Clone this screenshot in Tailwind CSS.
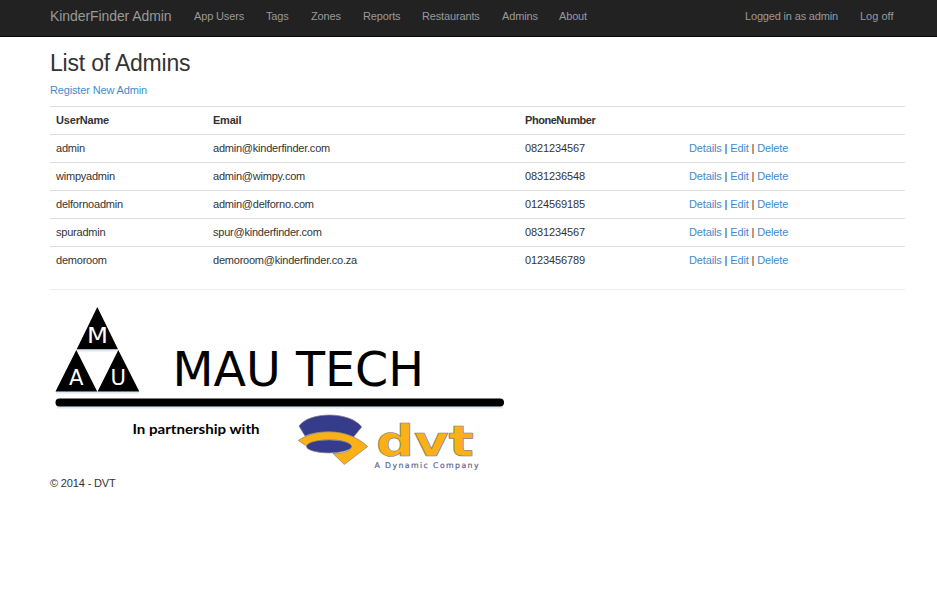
<!DOCTYPE html>
<html lang="en">
<head>
<meta charset="utf-8">
<title>List of Admins</title>
<script src="https://cdn.jsdelivr.net/npm/@tailwindcss/browser@4"></script>
</head>
<body class="bg-white font-['Liberation_Sans',Arial,sans-serif] text-[11px] leading-[15px] text-[#333]">
<nav class="h-[37px] bg-[#222] border-b border-[#080808] text-[#999] pl-[50px] pr-[43px] pt-[8px] flex">
  <a class="w-[144px] text-[14px] leading-[17px] tracking-[-0.08px] whitespace-nowrap">KinderFinder Admin</a>
  <div class="flex leading-[17px] tracking-[-0.15px] whitespace-nowrap">
    <a class="w-[72px]">App Users</a><a class="w-[45px]">Tags</a><a class="w-[52px]">Zones</a><a class="w-[59px]">Reports</a><a class="w-[80px]">Restaurants</a><a class="w-[57px]">Admins</a><a>About</a>
  </div>
  <div class="ml-auto flex leading-[17px] tracking-[-0.17px] whitespace-nowrap"><a class="w-[115px]">Logged in as admin</a><a class="w-[34px] tracking-normal">Log off</a></div>
</nav>
<main class="ml-[50px] w-[855px]">
  <h2 class="pt-[13px] text-[23px] leading-[26px] tracking-[-0.2px]">List of Admins</h2>
  <p class="mt-[7px] mb-[8px] text-[#428bca] tracking-[-0.15px]">Register New Admin</p>
  <table class="w-full table-fixed border-collapse text-left tracking-[-0.22px]">
    <colgroup><col class="w-[157px]"><col class="w-[312px]"><col class="w-[164px]"><col></colgroup>
    <thead><tr class="h-[28px] border-t border-[#ddd]"><th class="px-[6px] tracking-[-0.18px]">UserName</th><th class="px-[6px]">Email</th><th class="px-[6px] tracking-[-0.45px]">PhoneNumber</th><th></th></tr></thead>
    <tbody>
      <tr class="h-[28px] border-t border-[#ddd]"><td class="px-[6px]">admin</td><td class="px-[6px]">admin@kinderfinder.com</td><td class="px-[6px] tracking-[-0.12px]">0821234567</td><td class="px-[6px] tracking-[-0.14px]"><a class="text-[#428bca]">Details</a> | <a class="text-[#428bca]">Edit</a> | <a class="text-[#428bca]">Delete</a></td></tr>
      <tr class="h-[28px] border-t border-[#ddd]"><td class="px-[6px]">wimpyadmin</td><td class="px-[6px]">admin@wimpy.com</td><td class="px-[6px] tracking-[-0.12px]">0831236548</td><td class="px-[6px] tracking-[-0.14px]"><a class="text-[#428bca]">Details</a> | <a class="text-[#428bca]">Edit</a> | <a class="text-[#428bca]">Delete</a></td></tr>
      <tr class="h-[28px] border-t border-[#ddd]"><td class="px-[6px]">delfornoadmin</td><td class="px-[6px]">admin@delforno.com</td><td class="px-[6px] tracking-[-0.12px]">0124569185</td><td class="px-[6px] tracking-[-0.14px]"><a class="text-[#428bca]">Details</a> | <a class="text-[#428bca]">Edit</a> | <a class="text-[#428bca]">Delete</a></td></tr>
      <tr class="h-[28px] border-t border-[#ddd]"><td class="px-[6px]">spuradmin</td><td class="px-[6px]">spur@kinderfinder.com</td><td class="px-[6px] tracking-[-0.12px]">0831234567</td><td class="px-[6px] tracking-[-0.14px]"><a class="text-[#428bca]">Details</a> | <a class="text-[#428bca]">Edit</a> | <a class="text-[#428bca]">Delete</a></td></tr>
      <tr class="h-[28px] border-t border-[#ddd]"><td class="px-[6px]">demoroom</td><td class="px-[6px]">demoroom@kinderfinder.co.za</td><td class="px-[6px] tracking-[-0.12px]">0123456789</td><td class="px-[6px] tracking-[-0.14px]"><a class="text-[#428bca]">Details</a> | <a class="text-[#428bca]">Edit</a> | <a class="text-[#428bca]">Delete</a></td></tr>
    </tbody>
  </table>
  <hr class="mt-[14px] border-[#eee]">
  <footer class="pt-[10px]">
    <svg class="block" width="460" height="176" viewBox="50 300 460 176">
      <path d="M77 350.500H118M56 392.500H139M57 407.500H503" stroke="#dceaf6" stroke-width="2"/>
      <path d="M97.300 307L118 349.300H76.700ZM76.300 350L97.200 391.500H55.500ZM118.300 350L139.300 391.500H97.600Z" fill="#000"/>
      <g fill="#fff" font-family="DejaVu Sans,sans-serif" font-size="21">
        <text x="87" y="342.500" textLength="21" lengthAdjust="spacingAndGlyphs">M</text>
        <text x="69" y="385" textLength="14.500" lengthAdjust="spacingAndGlyphs">A</text>
        <text x="110.500" y="385" textLength="15.500" lengthAdjust="spacingAndGlyphs">U</text>
      </g>
      <text x="172.500" y="386" font-family="DejaVu Sans,sans-serif" font-size="47.500" textLength="251.500" lengthAdjust="spacingAndGlyphs" fill="#000">MAU TECH</text>
      <rect x="55.500" y="398.500" width="448.500" height="8" rx="4" fill="#000"/>
      <text x="132.500" y="434" font-family="Lato,sans-serif" font-weight="700" font-size="13.500" textLength="127" lengthAdjust="spacingAndGlyphs" fill="#000">In partnership with</text>
      <g stroke="#85807c" stroke-width=".7" stroke-linejoin="round">
        <path d="M299 426C309 411.500 350 411 361.700 427L353.500 437C341 431 318 430 305 436Z" fill="#363c8c"/>
        <path d="M298.300 440.500C315 429 347 427 367.700 446.500L344.300 464.500L333 453.500C346 454 354 449 350.500 444.500C343 438 315 438 306.500 446Z" fill="#fbb116"/>
        <ellipse cx="329" cy="446.400" rx="22.500" ry="6.500" fill="#363c8c"/>
        <text x="376" y="456" font-family="DejaVu Sans,sans-serif" font-weight="700" font-size="42" textLength="98" lengthAdjust="spacingAndGlyphs" fill="#fbb116">dvt</text>
      </g>
      <text x="374.500" y="467.500" font-family="DejaVu Sans,sans-serif" font-size="7.800" stroke="#62668f" stroke-width=".2" textLength="104" fill="#62668f">A Dynamic Company</text>
    </svg>
    <p class="tracking-[-0.15px]">© 2014 - DVT</p>
  </footer>
</main>
</body>
</html>
